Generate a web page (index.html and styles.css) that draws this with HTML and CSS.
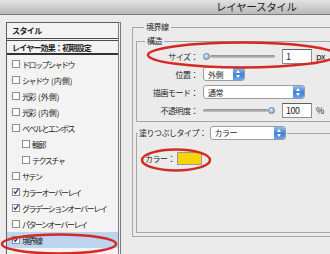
FILE: index.html
```html
<!DOCTYPE html>
<html lang="ja">
<head>
    <meta charset="UTF-8">
    <title>レイヤースタイル</title>
    <link rel="stylesheet" href="styles.css">
</head>
<body>
    <div class="title-bar">レイヤースタイル</div>
    <div class="main">
        <ul class="style-list">
            <li class="list-head">スタイル</li>
            <li class="list-sub">レイヤー効果：初期設定</li>
            <li><span class="check"></span>ドロップシャドウ</li>
            <li><span class="check"></span>シャドウ<span class="paren">(内側)</span></li>
            <li><span class="check"></span>光彩<span class="paren">(外側)</span></li>
            <li><span class="check"></span>光彩<span class="paren">(内側)</span></li>
            <li><span class="check"></span>ベベルとエンボス</li>
            <li class="indent"><span class="check"></span>輪郭</li>
            <li class="indent"><span class="check"></span>テクスチャ</li>
            <li><span class="check"></span>サテン</li>
            <li><span class="check on"><svg viewBox="0 0 10 10"><path d="M1.5 5 L4 8 L9 0.5" /></svg></span>カラーオーバーレイ</li>
            <li><span class="check on"><svg viewBox="0 0 10 10"><path d="M1.5 5 L4 8 L9 0.5" /></svg></span>グラデーションオーバーレイ</li>
            <li><span class="check"></span>パターンオーバーレイ</li>
            <li class="selected"><span class="check on"><svg viewBox="0 0 10 10"><path d="M1.5 5 L4 8 L9 0.5" /></svg></span>境界線</li>
        </ul>

        <div class="options">
            <fieldset class="group outer">
                <legend>境界線</legend>

                <fieldset class="group inner">
                    <legend>構造</legend>
                    <div class="row">
                        <label>サイズ：</label>
                        <div class="slider"><span class="knob"></span><span class="track"></span></div>
                        <div class="field">1</div>
                        <span class="unit">px</span>
                    </div>
                    <div class="row">
                        <label>位置：</label>
                        <div class="select small">外側<span class="stepper"></span></div>
                    </div>
                    <div class="row">
                        <label>描画モード：</label>
                        <div class="select wide">通常<span class="stepper"></span></div>
                    </div>
                    <div class="row">
                        <label>不透明度：</label>
                        <div class="slider"><span class="track"></span><span class="knob"></span></div>
                        <div class="field">100</div>
                        <span class="unit">%</span>
                    </div>
                </fieldset>

                <fieldset class="group fill">
                    <legend>塗りつぶしタイプ：<span class="select mid">カラー<span class="stepper"></span></span></legend>
                    <div class="color-row">
                        <label>カラー：</label>
                        <span class="swatch"></span>
                    </div>
                </fieldset>
            </fieldset>
        </div>
    </div>

    <!-- 注釈の赤丸 -->
    <svg class="marks" width="330" height="254">
        <ellipse cx="242" cy="55" rx="94" ry="12.5" />
        <ellipse cx="176" cy="160" rx="34" ry="10.5" />
        <ellipse cx="59" cy="244" rx="57" ry="9.5" />
    </svg>
</body>
</html>
```

FILE: styles.css
```css
* {
    margin: 0;
    padding: 0;
    box-sizing: border-box;
}

body {
    width: 330px;
    height: 254px;
    overflow: hidden;
    position: relative;
    background: #ebebeb;
    color: #1e1e1e;
    font-family: "Noto Sans CJK JP", "Liberation Sans", sans-serif;
    font-size: 8px;
    letter-spacing: -0.5px;
}

/* Title bar */
.title-bar {
    height: 15px;
    line-height: 14px;
    padding-left: 216px;
    font-size: 10.5px;
    letter-spacing: -0.3px;
    color: #202020;
    background: linear-gradient(#e2e2e2, #b9b9b9);
    border-bottom: 1px solid #7c7c7c;
}

.main {
    display: flex;
    padding-top: 7px;
}

/* Style list */
.style-list {
    list-style: none;
    width: 115px;
    flex-shrink: 0;
    margin-left: 6px;
    background: #f3f3f3;
    border: 1px solid #5e5e5e;
    border-right: 3px double #7a7a7a;
    height: 240px;
    letter-spacing: -1.5px;
}

.style-list li {
    display: flex;
    align-items: center;
    height: 16px;
    padding-left: 5px;
    white-space: nowrap;
}

.style-list .paren {
    letter-spacing: 0;
    margin-left: 3px;
}

.style-list .list-head {
    height: 18px;
    font-weight: bold;
    letter-spacing: -0.6px;
    border-bottom: 3px double #4a4a4a;
}

.style-list .list-sub {
    height: 14px;
    font-weight: bold;
    letter-spacing: -0.8px;
    padding-top: 1px;
    border-bottom: 2px solid #333;
    margin-bottom: 1px;
}

.style-list li.indent {
    padding-left: 15px;
}

.style-list li.selected {
    background: #bdd5ef;
}

.check {
    width: 8px;
    height: 8px;
    margin-right: 2px;
    background: #fff;
    border: 1px solid #8c8c8c;
    display: flex;
    flex-shrink: 0;
}

.check svg {
    width: 9px;
    height: 9px;
    margin: -2px 0 0 0;
    fill: none;
    stroke: #1f4a9a;
    stroke-width: 2.2;
}

/* Options - groups run off the right edge like the cropped dialog */
.options {
    flex: 1;
    min-width: 0;
    padding-left: 11px;
}

.group {
    border: 1px solid #a6a6a6;
    border-right: none;
    min-width: 0;
}

.group legend {
    line-height: 10px;
    padding: 0 2px;
    margin-left: 8px;
}

.outer {
    padding: 0 0 3px 3px;
}

.inner {
    margin-top: 4px;
    padding: 1px 0 2px 0;
}

.row {
    display: flex;
    align-items: center;
    height: 18px;
}

.row label {
    width: 61px;
    margin-right: 5px;
    text-align: right;
    white-space: nowrap;
}

.slider {
    width: 72px;
    display: flex;
    align-items: center;
}

.slider .track {
    flex: 1;
    height: 3px;
    border-radius: 2px;
    background: linear-gradient(#8d8d8d, #c4c4c4);
}

.slider .knob {
    width: 7px;
    height: 7px;
    border-radius: 50%;
    border: 1px solid #6a7f99;
    background: radial-gradient(circle at 40% 35%, #e2efff, #6f9ad6);
}

.field {
    width: 30px;
    height: 15px;
    margin-left: 7px;
    padding-left: 3px;
    line-height: 13px;
    font-size: 9px;
    background: #fff;
    border: 1px solid #8f8f8f;
    border-top-color: #5f5f5f;
}

.unit {
    margin-left: 4px;
    font-size: 9px;
}

.select {
    display: flex;
    align-items: center;
    justify-content: space-between;
    height: 14px;
    padding-left: 4px;
    background: #fff;
    border: 1px solid #9c9c9c;
    border-radius: 3px;
    overflow: hidden;
}

.select.small { width: 42px; }
.select.wide { width: 102px; }
.select.mid { width: 76px; margin-left: 3px; }

.stepper {
    width: 11px;
    height: 100%;
    position: relative;
    background: linear-gradient(#8fbcf0, #3f7fd6 55%, #6aa6ee);
}

.stepper::before,
.stepper::after {
    content: "";
    position: absolute;
    left: 3px;
    border-left: 2.5px solid transparent;
    border-right: 2.5px solid transparent;
}

.stepper::before {
    top: 2px;
    border-bottom: 3px solid #fff;
}

.stepper::after {
    bottom: 2px;
    border-top: 3px solid #fff;
}

.fill {
    margin-top: 4px;
    height: 107px;
    padding: 0;
}

.fill legend {
    display: flex;
    align-items: center;
    line-height: 14px;
    margin-left: 1px;
    padding: 0 1px;
}

.color-row {
    display: flex;
    align-items: center;
    padding: 12px 0 0 8px;
}

.swatch {
    width: 25px;
    height: 13px;
    margin-left: 2px;
    background: #f7d300;
    border: 1px solid #9a9a9a;
}

/* Annotation overlay */
.marks {
    position: absolute;
    left: 0;
    top: 0;
    pointer-events: none;
}

.marks ellipse {
    fill: none;
    stroke: #d42a26;
    stroke-width: 2.5;
}
```
